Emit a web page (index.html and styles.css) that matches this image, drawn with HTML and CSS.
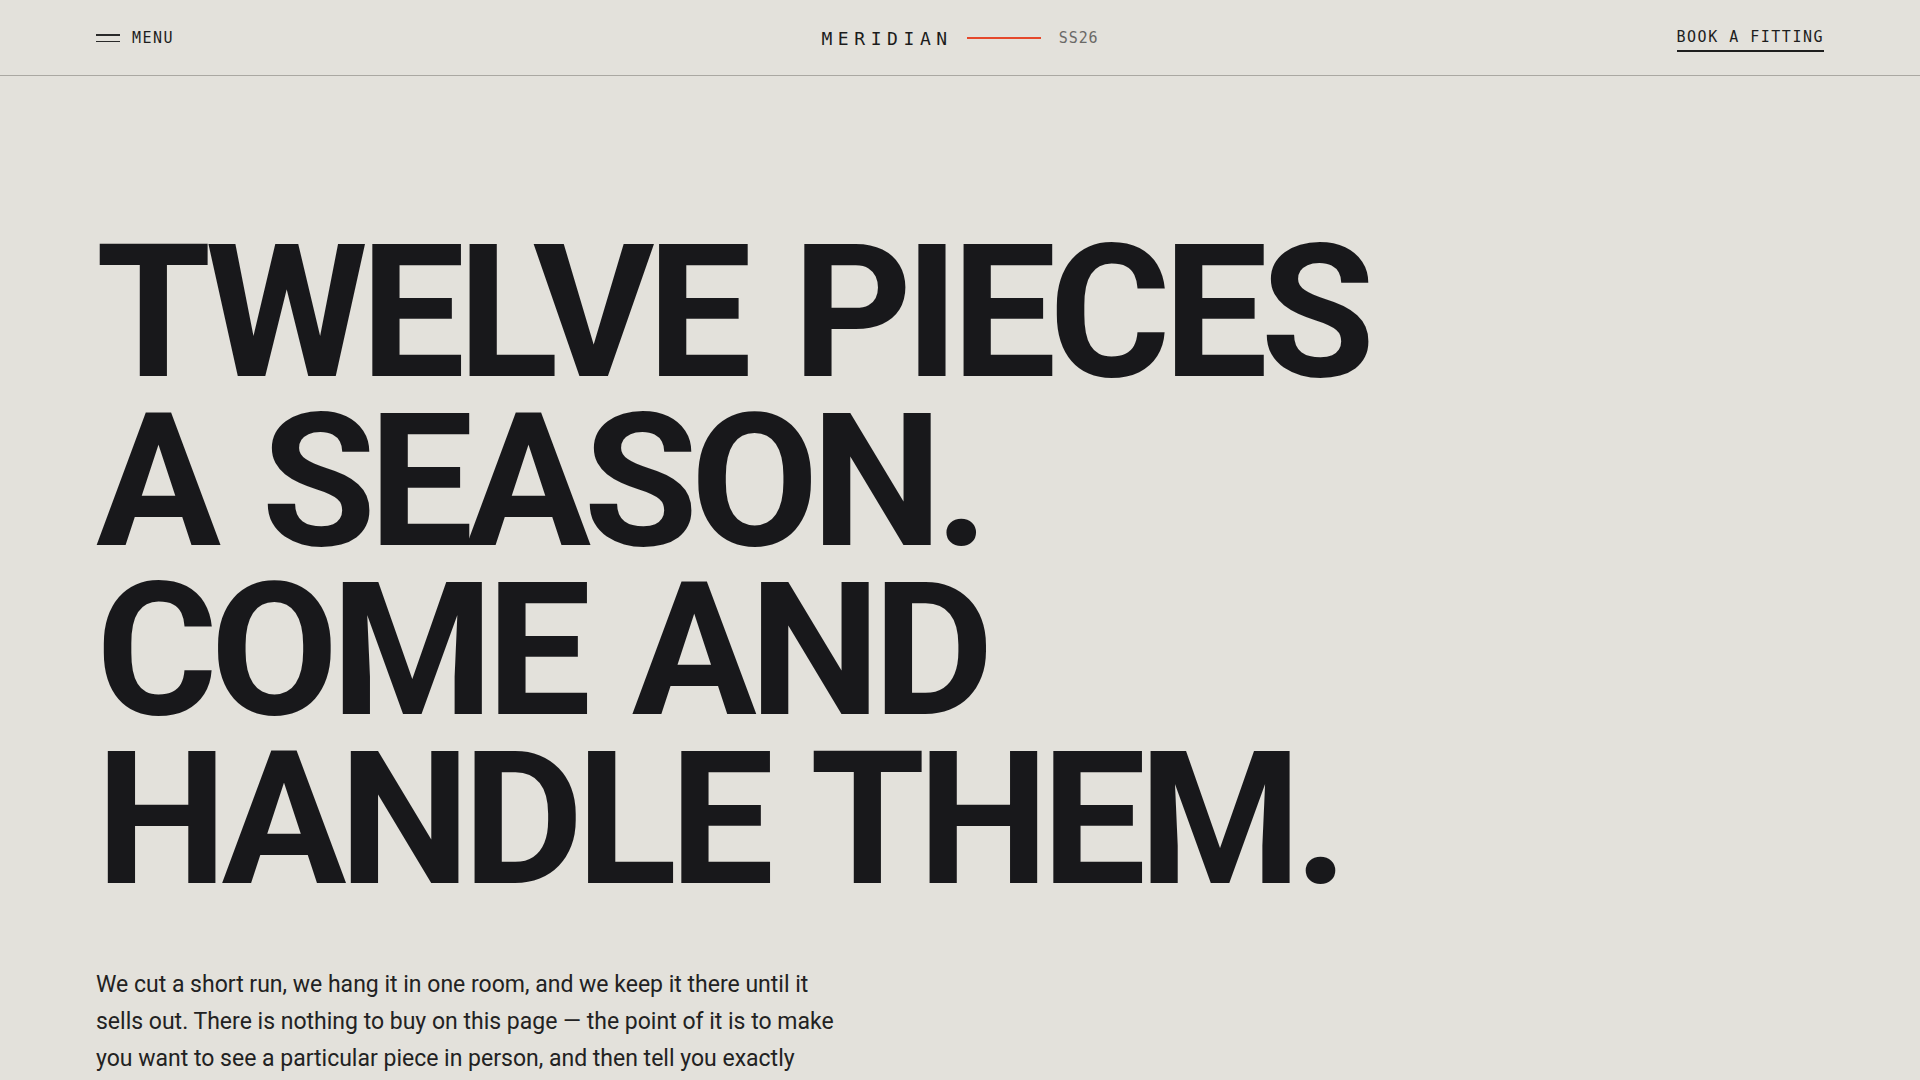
FILE: index.html
```html
<!DOCTYPE html>
<html lang="en">
<head>
<meta charset="utf-8">
<title>Meridian — SS26</title>
<link rel="stylesheet" href="styles.css">
</head>
<body>
<header class="topbar">
  <a class="menu" href="#">
    <span class="menu-icon"><span></span><span></span></span>
    <span class="menu-label">MENU</span>
  </a>
  <div class="brand">
    <span class="brand-name">MERIDIAN</span>
    <span class="brand-rule"></span>
    <span class="brand-season">SS26</span>
  </div>
  <a class="cta" href="#">BOOK A FITTING</a>
</header>
<main class="hero">
  <h1 class="headline">TWELVE PIECES<br>A SEASON.<br>COME AND<br>HANDLE THEM.</h1>
  <p class="lede">We cut a short run, we hang it in one room, and we keep it there until it sells out. There is nothing to buy on this page — the point of it is to make you want to see a particular piece in person, and then tell you exactly where it is and when you can come.</p>
</main>
</body>
</html>
```

FILE: styles.css
```css
html, body {
  margin: 0;
  padding: 0;
}
body {
  background: #e3e1db;
  color: #18181b;
  font-family: "Roboto", "Inter", sans-serif;
  overflow: hidden;
}
a {
  color: inherit;
  text-decoration: none;
}
.topbar {
  height: 76px;
  box-sizing: border-box;
  padding: 0 96px;
  display: grid;
  grid-template-columns: 1fr auto 1fr;
  align-items: center;
  border-bottom: 1px solid #aaa8a2;
  font-family: "DejaVu Sans Mono", "Liberation Mono", monospace;
}
.menu {
  display: flex;
  align-items: center;
  gap: 12px;
  justify-self: start;
  margin-top: 1px;
}
.menu-icon {
  display: flex;
  flex-direction: column;
  gap: 5px;
  width: 24px;
}
.menu-icon span {
  display: block;
  height: 1.5px;
  background: #2a2a2a;
}
.menu-label {
  font-size: 15px;
  letter-spacing: 0.1em;
  color: #1e1e1e;
}
.brand {
  display: flex;
  align-items: center;
  gap: 18px;
  margin-top: 1px;
}
.brand-name {
  font-size: 18px;
  letter-spacing: 0.31em;
  color: #1c1c1c;
  margin-right: -4px;
}
.brand-rule {
  width: 74px;
  height: 2.5px;
  background: #e5482b;
}
.brand-season {
  font-size: 15px;
  letter-spacing: 0.06em;
  color: #6a6966;
}
.cta {
  justify-self: end;
  font-size: 15px;
  letter-spacing: 0.1em;
  color: #1e1e1e;
  padding-bottom: 4px;
  border-bottom: 2px solid #1e1e1e;
  margin-top: 5px;
}
.hero {
  padding: 152px 96px 0;
}
.headline {
  margin: 0;
  font-family: "Roboto", "Inter", sans-serif;
  font-weight: 700;
  font-size: 186px;
  line-height: 169px;
  letter-spacing: -0.04em;
  word-spacing: 0.05em;
  color: #18181b;
}
.lede {
  margin: 62px 0 0;
  max-width: 745px;
  font-family: "Roboto", "Inter", sans-serif;
  font-size: 23px;
  line-height: 37px;
  color: #222222;
}
```
